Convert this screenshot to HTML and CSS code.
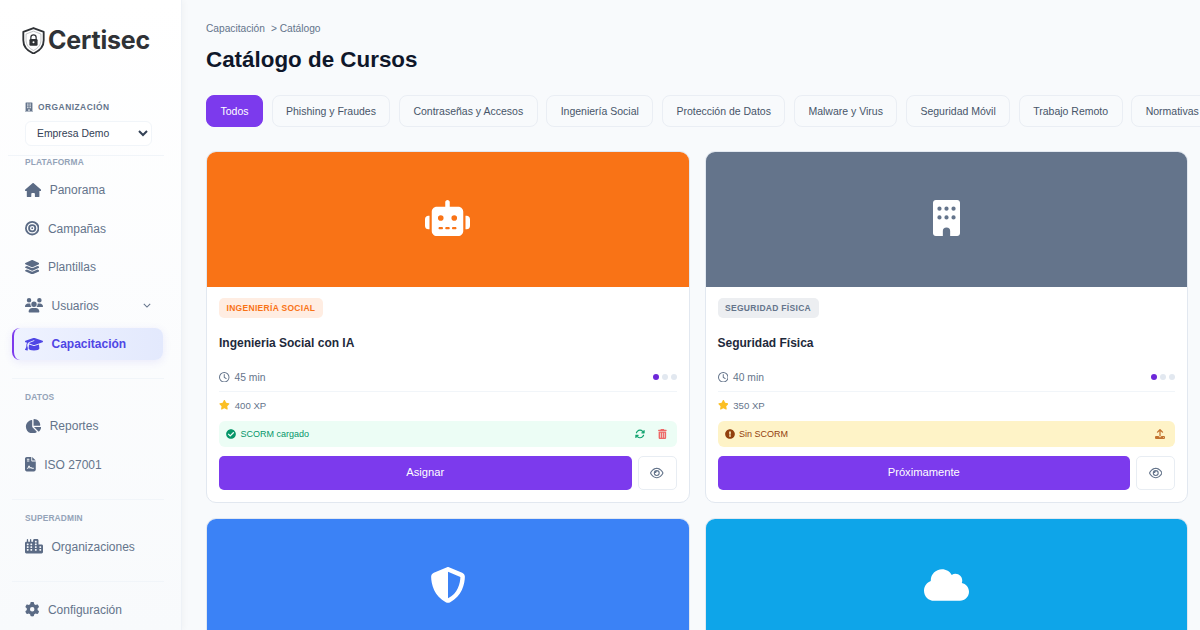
FILE: index.html
```html
<!DOCTYPE html>
<html lang="es">
<head>
    <meta charset="UTF-8">
    <title>Certisec - Catálogo de Cursos</title>
    <link rel="stylesheet" href="styles.css">
</head>
<body>

<svg class="icon-defs" aria-hidden="true">
    <defs>
        <path id="i-building" d="M436 480h-20V24c0-13.255-10.745-24-24-24H56C42.745 0 32 10.745 32 24v456H12c-6.627 0-12 5.373-12 12v20h448v-20c0-6.627-5.373-12-12-12zM128 76c0-6.627 5.373-12 12-12h40c6.627 0 12 5.373 12 12v40c0 6.627-5.373 12-12 12h-40c-6.627 0-12-5.373-12-12V76zm0 96c0-6.627 5.373-12 12-12h40c6.627 0 12 5.373 12 12v40c0 6.627-5.373 12-12 12h-40c-6.627 0-12-5.373-12-12v-40zm52 148h-40c-6.627 0-12-5.373-12-12v-40c0-6.627 5.373-12 12-12h40c6.627 0 12 5.373 12 12v40c0 6.627-5.373 12-12 12zm76 160h-64v-84c0-6.627 5.373-12 12-12h40c6.627 0 12 5.373 12 12v84zm64-172c0 6.627-5.373 12-12 12h-40c-6.627 0-12-5.373-12-12v-40c0-6.627 5.373-12 12-12h40c6.627 0 12 5.373 12 12v40zm0-96c0 6.627-5.373 12-12 12h-40c-6.627 0-12-5.373-12-12v-40c0-6.627 5.373-12 12-12h40c6.627 0 12 5.373 12 12v40zm0-96c0 6.627-5.373 12-12 12h-40c-6.627 0-12-5.373-12-12V76c0-6.627 5.373-12 12-12h40c6.627 0 12 5.373 12 12v40z"/>
        <path id="i-home" d="M575.8 255.500c0 18-15 32.100-32 32.100h-32l.7 160.200c0 2.700-.2 5.400-.5 8.100V472c0 22.100-17.900 40-40 40H456c-1.100 0-2.200 0-3.300-.1c-1.400 .1-2.800 .1-4.200 .1H416 392c-22.100 0-40-17.900-40-40V448 384c0-17.700-14.300-32-32-32H256c-17.700 0-32 14.300-32 32v64 24c0 22.100-17.900 40-40 40H160 128.100c-1.500 0-3-.1-4.500-.2c-1.200 .1-2.400 .2-3.600 .2H104c-22.100 0-40-17.900-40-40V360c0-.9 0-1.900 .1-2.800V287.600H32c-18 0-32-14-32-32.100c0-9 3-17 10-24L266.400 8c7-7 15-8 22-8s15 2 21 7L564.800 231.500c8 7 12 15 11 24z"/>
        <path id="i-bullseye" d="M448 256A192 192 0 1 0 64 256a192 192 0 1 0 384 0zM0 256a256 256 0 1 1 512 0A256 256 0 1 1 0 256zm256 80a80 80 0 1 0 0-160 80 80 0 1 0 0 160zm0-224a144 144 0 1 1 0 288 144 144 0 1 1 0-288zM224 256a32 32 0 1 1 64 0 32 32 0 1 1 -64 0z"/>
        <path id="i-layers" d="M12.410 148.020l232.940 105.670c6.800 3.090 14.490 3.090 21.290 0l232.940-105.670c16.550-7.510 16.550-32.520 0-40.030L266.650 2.310a25.607 25.607 0 0 0-21.290 0L12.410 107.980c-16.550 7.510-16.550 32.530 0 40.040zm487.180 88.280l-58.090-26.330-161.640 73.270c-7.560 3.430-15.590 5.170-23.860 5.170s-16.290-1.740-23.860-5.170L70.510 209.970l-58.100 26.330c-16.550 7.500-16.550 32.500 0 40l232.940 105.590c6.800 3.080 14.490 3.080 21.290 0L499.590 276.300c16.550-7.500 16.550-32.500 0-40zm0 127.800l-57.870-26.230-161.860 73.370c-7.560 3.430-15.590 5.170-23.860 5.170s-16.290-1.740-23.860-5.170L70.290 337.870 12.410 364.100c-16.550 7.500-16.550 32.500 0 40l232.940 105.590c6.800 3.080 14.490 3.080 21.290 0L499.590 404.100c16.550-7.500 16.550-32.500 0-40z"/>
        <path id="i-users" d="M144 0a80 80 0 1 1 0 160A80 80 0 1 1 144 0zM512 0a80 80 0 1 1 0 160A80 80 0 1 1 512 0zM0 298.700C0 239.800 47.800 192 106.700 192h42.700c15.900 0 31 3.500 44.600 9.700c-1.300 7.200-1.900 14.700-1.900 22.300c0 38.200 16.800 72.500 43.300 96c-.2 0-.4 0-.7 0H21.300C9.600 320 0 310.400 0 298.700zM405.300 320c-.2 0-.4 0-.7 0c26.600-23.500 43.300-57.800 43.300-96c0-7.600-.7-15-1.900-22.300c13.600-6.300 28.700-9.700 44.600-9.700h42.700C592.200 192 640 239.800 640 298.700c0 11.800-9.600 21.300-21.300 21.300H405.300zM224 224a96 96 0 1 1 192 0 96 96 0 1 1 -192 0zM128 485.300C128 411.700 187.700 352 261.300 352H378.700C452.300 352 512 411.700 512 485.300c0 14.700-11.900 26.700-26.700 26.700H154.700c-14.700 0-26.700-11.900-26.700-26.700z"/>
        <path id="i-cap" d="M320 32c-8.100 0-16.100 1.400-23.700 4.100L15.800 137.400C6.300 140.900 0 149.900 0 160s6.300 19.100 15.800 22.600l57.900 20.900C57.300 229.300 48 259.800 48 291.900v28.100c0 28.400-10.800 57.700-22.300 80.800c-6.500 13-13.900 25.800-22.500 37.600C0 442.700-.9 448.300 .9 453.400s6 8.900 11.200 10.200l64 16c4.200 1.100 8.700 .3 12.400-2s6.300-6.100 7.100-10.400c8.600-42.800 4.300-81.200-2.100-108.700C90.300 344.300 86 329.800 80 316.500V291.900c0-30.200 10.200-58.700 27.900-81.500c12.900-15.500 29.600-28 49.200-35.700l157-61.700c8.200-3.200 17.500 .8 20.700 9s-.8 17.500-9 20.700l-157 61.700c-12.400 4.900-23.300 12.400-32.200 21.600l159.600 57.600c7.600 2.700 15.600 4.100 23.700 4.100s16.100-1.400 23.700-4.100L624.200 182.600c9.500-3.400 15.800-12.500 15.800-22.600s-6.300-19.100-15.800-22.600L343.700 36.100C336.100 33.400 328.100 32 320 32zM128 408c0 35.300 86 72 192 72s192-36.700 192-72L496.700 262.600 354.500 314c-11.100 4-22.800 6-34.500 6s-23.500-2-34.500-6L143.300 262.600 128 408z"/>
        <path id="i-pie" d="M304 240V16.600c0-9 7-16.600 16-16.600C443.700 0 544 100.300 544 224c0 9-7.600 16-16.600 16H304zM32 272C32 150.700 122.100 50.300 239 34.300c9.200-1.300 17 6.100 17 15.400V288L412.500 444.500c6.700 6.700 6.200 17.700-1.500 23.100C371.800 495.600 323.800 512 272 512C139.500 512 32 404.600 32 272zm526.400 16c9.300 0 16.600 7.800 15.400 17c-7.700 55.900-34.600 105.600-73.900 142.300c-6 5.600-15.400 5.200-21.200-.7L320 288H558.400z"/>
        <path id="i-file" d="M64 0C28.700 0 0 28.700 0 64V448c0 35.300 28.700 64 64 64H320c35.300 0 64-28.700 64-64V160H256c-17.700 0-32-14.300-32-32V0H64zM256 0V128H384L256 0zM80 64h64c8.800 0 16 7.200 16 16s-7.200 16-16 16H80c-8.800 0-16-7.200-16-16s7.200-16 16-16zm0 64h64c8.800 0 16 7.200 16 16s-7.200 16-16 16H80c-8.800 0-16-7.200-16-16s7.200-16 16-16zm54.200 253.800c-6.100 20.300-24.800 34.200-46 34.200H80c-8.800 0-16-7.200-16-16s7.200-16 16-16h8.200c7.100 0 13.300-4.600 15.300-11.400l14.900-49.500c3.400-11.300 13.800-19.100 25.600-19.100s22.200 7.700 25.600 19.100l11.600 38.600c7.400-6.200 16.800-9.700 26.800-9.700c15.900 0 30.400 9 37.500 23.200l4.400 8.800H304c8.800 0 16 7.200 16 16s-7.200 16-16 16H240c-6.100 0-11.600-3.400-14.300-8.800l-8.800-17.700c-1.700-3.400-5.100-5.500-8.800-5.500s-7.200 2.100-8.800 5.500l-8.800 17.700c-2.900 5.900-9.200 9.400-15.700 8.800s-12.100-5.100-14-11.300L144 349l-9.800 32.800z"/>
        <path id="i-city" d="M480 48c0-26.500-21.500-48-48-48H336c-26.500 0-48 21.500-48 48V96H224V24c0-13.300-10.700-24-24-24s-24 10.700-24 24V96H112V24c0-13.300-10.700-24-24-24S64 10.700 64 24V96H48C21.500 96 0 117.500 0 144v96V464c0 26.500 21.500 48 48 48H304h32 96H592c26.500 0 48-21.500 48-48V240c0-26.500-21.500-48-48-48H480V48zm96 320v32c0 8.800-7.200 16-16 16H528c-8.800 0-16-7.200-16-16V368c0-8.800 7.200-16 16-16h32c8.800 0 16 7.200 16 16zM240 416H208c-8.800 0-16-7.200-16-16V368c0-8.800 7.200-16 16-16h32c8.800 0 16 7.200 16 16v32c0 8.800-7.200 16-16 16zM128 400c0 8.800-7.200 16-16 16H80c-8.800 0-16-7.200-16-16V368c0-8.800 7.200-16 16-16h32c8.800 0 16 7.200 16 16v32zM560 256c8.800 0 16 7.200 16 16v32c0 8.800-7.200 16-16 16H528c-8.800 0-16-7.200-16-16V272c0-8.800 7.200-16 16-16h32zM256 176v32c0 8.800-7.200 16-16 16H208c-8.800 0-16-7.200-16-16V176c0-8.800 7.200-16 16-16h32c8.800 0 16 7.200 16 16zM112 160c8.800 0 16 7.200 16 16v32c0 8.800-7.200 16-16 16H80c-8.800 0-16-7.200-16-16V176c0-8.800 7.200-16 16-16h32zM256 304c0 8.800-7.200 16-16 16H208c-8.800 0-16-7.200-16-16V272c0-8.800 7.200-16 16-16h32c8.800 0 16 7.200 16 16v32zM112 320H80c-8.800 0-16-7.200-16-16V272c0-8.800 7.200-16 16-16h32c8.800 0 16 7.200 16 16v32c0 8.800-7.200 16-16 16zm304-48v32c0 8.800-7.200 16-16 16H368c-8.800 0-16-7.200-16-16V272c0-8.800 7.200-16 16-16h32c8.800 0 16 7.200 16 16zM368 64h32c8.800 0 16 7.200 16 16v32c0 8.800-7.200 16-16 16H368c-8.800 0-16-7.200-16-16V80c0-8.800 7.200-16 16-16zm48 112v32c0 8.800-7.200 16-16 16H368c-8.800 0-16-7.200-16-16V176c0-8.800 7.200-16 16-16h32c8.800 0 16 7.200 16 16zM368 352h32c8.800 0 16 7.200 16 16v32c0 8.800-7.200 16-16 16H368c-8.800 0-16-7.200-16-16V368c0-8.800 7.200-16 16-16z"/>
        <path id="i-cog" d="M495.900 166.600c3.200 8.700 .5 18.400-6.400 24.600l-43.300 39.400c1.100 8.300 1.700 16.800 1.700 25.400s-.6 17.100-1.700 25.400l43.300 39.400c6.900 6.200 9.600 15.900 6.400 24.600c-4.400 11.900-9.700 23.300-15.800 34.300l-4.700 8.100c-6.600 11-14 21.400-22.100 31.200c-5.900 7.200-15.700 9.600-24.500 6.800l-55.700-17.700c-13.400 10.300-28.200 18.900-44 25.400l-12.500 57.100c-2 9.100-9 16.300-18.200 17.800c-13.800 2.300-28 3.500-42.500 3.500s-28.700-1.200-42.500-3.500c-9.200-1.500-16.200-8.700-18.200-17.800l-12.500-57.100c-15.800-6.500-30.600-15.100-44-25.400L83.100 425.900c-8.800 2.800-18.600 .3-24.500-6.800c-8.100-9.800-15.500-20.200-22.100-31.200l-4.700-8.100c-6.100-11-11.400-22.400-15.800-34.300c-3.200-8.700-.5-18.400 6.400-24.600l43.300-39.400C64.600 273.100 64 264.600 64 256s.6-17.100 1.700-25.400L22.400 191.200c-6.900-6.200-9.600-15.900-6.400-24.600c4.400-11.900 9.700-23.300 15.800-34.300l4.700-8.100c6.600-11 14-21.400 22.100-31.200c5.900-7.200 15.700-9.600 24.500-6.800l55.700 17.700c13.400-10.300 28.200-18.900 44-25.400l12.500-57.100c2-9.100 9-16.300 18.200-17.800C227.300 1.200 241.500 0 256 0s28.700 1.200 42.500 3.500c9.200 1.500 16.200 8.700 18.200 17.800l12.500 57.100c15.800 6.500 30.600 15.100 44 25.400l55.700-17.700c8.800-2.800 18.600-.3 24.500 6.800c8.100 9.800 15.500 20.200 22.100 31.200l4.700 8.100c6.100 11 11.400 22.400 15.800 34.300zM256 336a80 80 0 1 0 0-160 80 80 0 1 0 0 160z"/>
        <path id="i-robot" d="M320 0c17.700 0 32 14.300 32 32V96H472c39.800 0 72 32.200 72 72V440c0 39.800-32.200 72-72 72H168c-39.800 0-72-32.200-72-72V168c0-39.800 32.200-72 72-72H288V32c0-17.700 14.300-32 32-32zM208 384c-8.800 0-16 7.200-16 16s7.200 16 16 16h32c8.800 0 16-7.200 16-16s-7.200-16-16-16H208zm96 0c-8.800 0-16 7.200-16 16s7.200 16 16 16h32c8.800 0 16-7.200 16-16s-7.200-16-16-16H304zm96 0c-8.800 0-16 7.200-16 16s7.200 16 16 16h32c8.800 0 16-7.200 16-16s-7.200-16-16-16H400zM264 256a40 40 0 1 0 -80 0 40 40 0 1 0 80 0zm152 40a40 40 0 1 0 0-80 40 40 0 1 0 0 80zM48 224H64V416H48c-26.500 0-48-21.500-48-48V272c0-26.500 21.500-48 48-48zm544 0c26.500 0 48 21.500 48 48v96c0 26.500-21.500 48-48 48H576V224h16z"/>
        <path id="i-office" fill-rule="evenodd" d="M40 0H344c22 0 40 18 40 40V472c0 22-18 40-40 40H244V442a52 52 0 0 0-104 0v70H40c-22 0-40-18-40-40V40C0 18 18 0 40 0zM92 94a30 30 0 1 0 0 60 30 30 0 1 0 0-60zm100 0a30 30 0 1 0 0 60 30 30 0 1 0 0-60zm100 0a30 30 0 1 0 0 60 30 30 0 1 0 0-60zM92 218a30 30 0 1 0 0 60 30 30 0 1 0 0-60zm100 0a30 30 0 1 0 0 60 30 30 0 1 0 0-60zm100 0a30 30 0 1 0 0 60 30 30 0 1 0 0-60z"/>
        <path id="i-shield" d="M256 0c4.600 0 9.200 1 13.400 2.900L457.700 82.800c22 9.300 38.400 31 38.300 57.200c-.5 99.200-41.300 280.700-213.600 363.200c-16.700 8-36.100 8-52.800 0C57.300 420.700 16.500 239.200 16 140c-.1-26.200 16.300-47.900 38.300-57.200L242.700 2.900C246.800 1 251.400 0 256 0zm0 66.800V444.800C394 378 431.100 230.100 432 141.400L256 66.800l0 0z"/>
        <path id="i-cloud" d="M0 336c0 79.500 64.500 144 144 144H512c70.700 0 128-57.300 128-128c0-61.900-44-113.600-102.400-125.400c4.100-10.700 6.400-22.400 6.400-34.600c0-53-43-96-96-96c-19.700 0-38.100 6-53.300 16.200C367 64.200 315.300 32 256 32C167.600 32 96 103.600 96 192c0 2.700 .1 5.400 .2 8.100C40.200 219.800 0 273.200 0 336z"/>
        <path id="i-clock" d="M464 256A208 208 0 1 1 48 256a208 208 0 1 1 416 0zM0 256a256 256 0 1 0 512 0A256 256 0 1 0 0 256zM232 120V256c0 8 4 15.500 10.700 20l96 64c11 7.400 25.900 4.400 33.300-6.700s4.400-25.900-6.700-33.300L280 243.200V120c0-13.300-10.700-24-24-24s-24 10.700-24 24z"/>
        <path id="i-star" d="M259.300 17.800L194 150.200 47.900 171.500c-26.200 3.800-36.700 36.100-17.700 54.600l105.700 103-25 145.500c-4.500 26.300 23.200 46 46.400 33.700L288 439.600l130.700 68.700c23.200 12.200 50.900-7.400 46.400-33.700l-25-145.500 105.700-103c19-18.500 8.500-50.800-17.700-54.600L382 150.200 316.700 17.800c-11.700-23.600-45.600-23.900-57.400 0z"/>
        <path id="i-check" d="M504 256c0 136.967-111.033 248-248 248S8 392.967 8 256 119.033 8 256 8s248 111.033 248 248zM227.314 387.314l184-184c6.248-6.248 6.248-16.379 0-22.627l-22.627-22.627c-6.248-6.249-16.379-6.249-22.628 0L216 308.118l-70.059-70.059c-6.248-6.248-16.379-6.248-22.628 0l-22.627 22.627c-6.248 6.248-6.248 16.379 0 22.627l104 104c6.249 6.249 16.379 6.249 22.628.001z"/>
        <path id="i-sync" d="M105.100 202.600c7.700-21.800 20.200-42.300 37.800-59.800c62.500-62.500 163.800-62.500 226.300 0L386.300 160H352c-17.700 0-32 14.300-32 32s14.300 32 32 32H463.500c0 0 0 0 0 0h.4c17.700 0 32-14.300 32-32V80c0-17.700-14.300-32-32-32s-32 14.300-32 32v35.200L414.400 97.600c-87.500-87.500-229.300-87.500-316.800 0C73.200 122 55.600 150.700 44.800 181.400c-5.900 16.700 2.900 34.900 19.500 40.800s34.900-2.900 40.800-19.500zM39 289.300c-5 1.500-9.800 4.200-13.700 8.200c-4 4-6.700 8.800-8.100 14c-.3 1.200-.6 2.500-.8 3.800c-.3 1.700-.4 3.400-.4 5.100V432c0 17.700 14.300 32 32 32s32-14.300 32-32V396.900l17.600 17.500 0 0c87.500 87.400 229.300 87.400 316.700 0c24.400-24.400 42.100-53.100 52.900-83.700c5.900-16.700-2.900-34.900-19.500-40.800s-34.900 2.900-40.800 19.500c-7.700 21.800-20.200 42.300-37.800 59.800c-62.500 62.500-163.800 62.500-226.300 0l-.1-.1L125.600 352H160c17.700 0 32-14.300 32-32s-14.300-32-32-32H48.400c-1.600 0-3.200 .1-4.800 .3s-3.100 .5-4.600 1z"/>
        <path id="i-trash" d="M135.200 17.700C140.600 6.800 151.700 0 163.800 0H284.200c12.100 0 23.200 6.800 28.600 17.700L320 32h96c17.700 0 32 14.300 32 32s-14.300 32-32 32H32C14.300 96 0 81.700 0 64S14.300 32 32 32h96l7.200-14.300zM32 128H416V448c0 35.300-28.700 64-64 64H96c-35.300 0-64-28.700-64-64V128zm96 64c-8.800 0-16 7.200-16 16V432c0 8.800 7.200 16 16 16s16-7.200 16-16V208c0-8.800-7.200-16-16-16zm96 0c-8.800 0-16 7.200-16 16V432c0 8.800 7.200 16 16 16s16-7.200 16-16V208c0-8.800-7.200-16-16-16zm96 0c-8.800 0-16 7.200-16 16V432c0 8.800 7.200 16 16 16s16-7.200 16-16V208c0-8.800-7.200-16-16-16z"/>
        <path id="i-alert" d="M504 256c0 136.997-111.043 248-248 248S8 392.997 8 256C8 119.083 119.043 8 256 8s248 111.083 248 248zm-248 50c-25.405 0-46 20.595-46 46s20.595 46 46 46 46-20.595 46-46-20.595-46-46-46zm-43.673-165.346l7.418 136c.347 6.364 5.609 11.346 11.982 11.346h48.546c6.373 0 11.635-4.982 11.982-11.346l7.418-136c.375-6.874-5.098-12.654-11.982-12.654h-63.383c-6.884 0-12.356 5.780-11.981 12.654z"/>
        <path id="i-upload" d="M288 109.300V352c0 17.700-14.300 32-32 32s-32-14.300-32-32V109.300l-73.400 73.400c-12.500 12.500-32.800 12.500-45.300 0s-12.500-32.800 0-45.300l128-128c12.500-12.500 32.800-12.500 45.300 0l128 128c12.500 12.500 12.500 32.800 0 45.300s-32.800 12.500-45.300 0L288 109.300zM64 352H192c0 35.300 28.700 64 64 64s64-28.700 64-64H448c35.300 0 64 28.700 64 64v32c0 35.300-28.700 64-64 64H64c-35.300 0-64-28.700-64-64V416c0-35.300 28.700-64 64-64zM432 456a24 24 0 1 0 0-48 24 24 0 1 0 0 48z"/>
        <path id="i-eye" d="M288 80c-65.200 0-118.800 29.600-159.900 67.700C89.600 183.500 63 226 49.400 256c13.600 30 40.200 72.500 78.600 108.300C169.200 402.400 222.800 432 288 432s118.800-29.600 159.900-67.700C486.400 328.500 513 286 526.600 256c-13.600-30-40.200-72.500-78.600-108.300C406.800 109.600 353.200 80 288 80zM95.400 112.600C142.500 68.800 207.200 32 288 32s145.500 36.800 192.600 80.600c46.800 43.500 78.100 95.400 93 131.100c3.300 7.900 3.300 16.700 0 24.600c-14.900 35.700-46.200 87.700-93 131.100C433.500 443.200 368.800 480 288 480s-145.500-36.800-192.600-80.600C48.600 356 17.300 304 2.500 268.300c-3.300-7.900-3.300-16.700 0-24.600C17.300 208 48.600 156 95.400 112.600zM288 336c44.200 0 80-35.800 80-80s-35.800-80-80-80c-.7 0-1.300 0-2 0c1.300 5.100 2 10.500 2 16c0 35.300-28.700 64-64 64c-5.500 0-10.900-.7-16-2c0 .7 0 1.300 0 2c0 44.200 35.800 80 80 80zm0-208a128 128 0 1 1 0 256 128 128 0 1 1 0-256z"/>
    </defs>
</svg>

<div class="app">
    <aside class="sidebar">
        <div class="logo">
            <svg class="logo-mark" viewBox="1 0.500 22 26.500">
                <path class="logo-outer" d="M12 1.500l10 3.800v8.200c0 6-4 10.500-10 13-6-2.500-10-7-10-13V5.300z"/>
                <path class="logo-inner" d="M12 4.600l7.300 2.800v6.100c0 4.600-3 8-7.300 10-4.300-2-7.300-5.400-7.300-10V7.400z"/>
                <path class="logo-shackle" d="M9.400 12.800v-2a2.600 2.600 0 0 1 5.200 0v2"/>
                <rect class="logo-lock" x="8" y="12.400" width="8" height="6.400" rx="1.200"/>
                <circle class="logo-key" cx="12" cy="15.500" r="1"/>
            </svg>
            <span class="logo-text">Certisec</span>
        </div>

        <div class="org">
            <div class="org-label">
                <svg class="org-icon" viewBox="0 0 448 512"><use href="#i-building"/></svg>
                <span>ORGANIZACIÓN</span>
            </div>
            <select class="org-select">
                <option>Empresa Demo</option>
            </select>
        </div>

        <div class="section section-first">
            <div class="section-title">PLATAFORMA</div>
            <nav class="nav">
                <a class="nav-item"><svg class="nav-icon" viewBox="0 0 576 512"><use href="#i-home"/></svg>Panorama</a>
                <a class="nav-item"><svg class="nav-icon" viewBox="0 0 512 512"><use href="#i-bullseye"/></svg>Campañas</a>
                <a class="nav-item"><svg class="nav-icon" viewBox="0 0 512 512"><use href="#i-layers"/></svg>Plantillas</a>
                <a class="nav-item"><svg class="nav-icon" viewBox="0 0 640 512"><use href="#i-users"/></svg>Usuarios
                    <svg class="nav-chevron" viewBox="0 0 10 6"><path d="M1 1l4 4 4-4"/></svg>
                </a>
                <a class="nav-item active"><svg class="nav-icon" viewBox="0 0 640 512"><use href="#i-cap"/></svg>Capacitación</a>
            </nav>
        </div>

        <div class="section">
            <div class="section-title section-title-low">DATOS</div>
            <nav class="nav">
                <a class="nav-item"><svg class="nav-icon" viewBox="0 0 576 512"><use href="#i-pie"/></svg>Reportes</a>
                <a class="nav-item"><svg class="nav-icon" viewBox="0 0 384 512"><use href="#i-file"/></svg>ISO 27001</a>
            </nav>
        </div>

        <div class="section">
            <div class="section-title section-title-low">SUPERADMIN</div>
            <nav class="nav">
                <a class="nav-item"><svg class="nav-icon" viewBox="0 0 640 512"><use href="#i-city"/></svg>Organizaciones</a>
            </nav>
        </div>

        <nav class="nav nav-bottom">
            <a class="nav-item"><svg class="nav-icon" viewBox="0 0 512 512"><use href="#i-cog"/></svg>Configuración</a>
        </nav>
    </aside>

    <main class="main">
        <div class="breadcrumb"><span>Capacitación</span><span>&gt; Catálogo</span></div>
        <h1 class="page-title">Catálogo de Cursos</h1>

        <div class="filters">
            <button class="filter active">Todos</button>
            <button class="filter">Phishing y Fraudes</button>
            <button class="filter">Contraseñas y Accesos</button>
            <button class="filter">Ingeniería Social</button>
            <button class="filter">Protección de Datos</button>
            <button class="filter">Malware y Virus</button>
            <button class="filter">Seguridad Móvil</button>
            <button class="filter">Trabajo Remoto</button>
            <button class="filter">Normativas</button>
        </div>

        <div class="grid">
            <article class="card">
                <div class="card-media media-orange">
                    <svg class="media-icon" viewBox="0 0 640 512"><use href="#i-robot"/></svg>
                </div>
                <div class="card-body">
                    <span class="tag tag-orange">INGENIERÍA SOCIAL</span>
                    <h2 class="card-title">Ingenieria Social con IA</h2>
                    <div class="meta meta-line">
                        <span class="meta-item"><svg class="meta-icon" viewBox="0 0 512 512"><use href="#i-clock"/></svg>45 min</span>
                        <span class="dots"><i class="dot on"></i><i class="dot"></i><i class="dot"></i></span>
                    </div>
                    <div class="meta">
                        <span class="meta-item meta-xp"><svg class="meta-icon star" viewBox="0 0 576 512"><use href="#i-star"/></svg>400 XP</span>
                    </div>
                    <div class="scorm scorm-ok">
                        <svg class="scorm-icon" viewBox="0 0 512 512"><use href="#i-check"/></svg>
                        <span>SCORM cargado</span>
                        <span class="scorm-actions">
                            <svg class="scorm-icon icon-sync" viewBox="0 0 512 512"><use href="#i-sync"/></svg>
                            <svg class="scorm-icon icon-trash" viewBox="0 0 448 512"><use href="#i-trash"/></svg>
                        </span>
                    </div>
                    <div class="actions">
                        <button class="btn-primary">Asignar</button>
                        <button class="btn-eye"><svg class="eye-icon" viewBox="0 0 576 512"><use href="#i-eye"/></svg></button>
                    </div>
                </div>
            </article>

            <article class="card">
                <div class="card-media media-slate">
                    <svg class="media-icon" viewBox="0 0 384 512"><use href="#i-office"/></svg>
                </div>
                <div class="card-body">
                    <span class="tag tag-slate">SEGURIDAD FÍSICA</span>
                    <h2 class="card-title">Seguridad Física</h2>
                    <div class="meta meta-line">
                        <span class="meta-item"><svg class="meta-icon" viewBox="0 0 512 512"><use href="#i-clock"/></svg>40 min</span>
                        <span class="dots"><i class="dot on"></i><i class="dot"></i><i class="dot"></i></span>
                    </div>
                    <div class="meta">
                        <span class="meta-item meta-xp"><svg class="meta-icon star" viewBox="0 0 576 512"><use href="#i-star"/></svg>350 XP</span>
                    </div>
                    <div class="scorm scorm-none">
                        <svg class="scorm-icon" viewBox="0 0 512 512"><use href="#i-alert"/></svg>
                        <span>Sin SCORM</span>
                        <span class="scorm-actions">
                            <svg class="scorm-icon icon-upload" viewBox="0 0 512 512"><use href="#i-upload"/></svg>
                        </span>
                    </div>
                    <div class="actions">
                        <button class="btn-primary">Próximamente</button>
                        <button class="btn-eye"><svg class="eye-icon" viewBox="0 0 576 512"><use href="#i-eye"/></svg></button>
                    </div>
                </div>
            </article>

            <article class="card">
                <div class="card-media media-blue">
                    <svg class="media-icon" viewBox="0 0 512 512"><use href="#i-shield"/></svg>
                </div>
            </article>

            <article class="card">
                <div class="card-media media-sky">
                    <svg class="media-icon" viewBox="0 0 640 512"><use href="#i-cloud"/></svg>
                </div>
            </article>
        </div>
    </main>
</div>

</body>
</html>
```

FILE: styles.css
```css
* {
    box-sizing: border-box;
}

html, body {
    margin: 0;
    height: 100%;
    overflow: hidden;
}

body {
    background-color: #f8fafc;
    font-family: "Liberation Sans", Arial, sans-serif;
    color: #1e293b;
}

.icon-defs {
    position: absolute;
    width: 0;
    height: 0;
}

.app {
    display: flex;
    height: 630px;
}

/* sidebar */
.sidebar {
    width: 182px;
    flex-shrink: 0;
    padding: 27px 17px 0 12px;
    background: linear-gradient(180deg, #ffffff 0%, #f8fafc 100%);
    border-right: 1px solid #eef2f7;
    box-shadow: 2px 0 6px rgba(15, 23, 42, 0.03);
}

.logo {
    display: flex;
    align-items: center;
    gap: 3px;
    height: 26px;
    padding-left: 10px;
}

.logo-mark {
    width: 23px;
    height: 27px;
    flex-shrink: 0;
}

.logo-outer {
    fill: none;
    stroke: #2f3236;
    stroke-width: 1.8;
    stroke-linejoin: round;
}

.logo-inner {
    fill: none;
    stroke: #8b8e92;
    stroke-width: 0.5;
    stroke-linejoin: round;
}

.logo-shackle {
    fill: none;
    stroke: #2f3236;
    stroke-width: 1.2;
}

.logo-lock {
    fill: #2f3236;
}

.logo-key {
    fill: #ffffff;
}

.logo-text {
    font-family: Inter, "Liberation Sans", sans-serif;
    font-size: 25px;
    font-weight: 700;
    color: #2f3236;
    letter-spacing: -0.2px;
}

.org {
    margin-top: 49px;
    margin-left: -4px;
    padding: 0 0 9px 17px;
    border-bottom: 1px solid #f1f5f9;
}

.org-label {
    display: flex;
    align-items: center;
    gap: 5px;
    height: 10px;
    font-size: 8.4px;
    font-weight: 700;
    letter-spacing: 0.5px;
    color: #64748b;
}

.org-icon {
    width: 8px;
    height: 10px;
    fill: #64748b;
}

.org-select {
    display: block;
    width: 127px;
    height: 25px;
    margin-top: 9px;
    padding: 0 0 0 7px;
    font-family: "Liberation Sans", Arial, sans-serif;
    font-size: 10.4px;
    color: #334155;
    background-color: #ffffff;
    border: 1px solid #f1f5f9;
    border-radius: 6px;
}

.section {
    padding-bottom: 18px;
    padding-top: 13px;
    border-bottom: 1px solid #f1f5f9;
}

.section-first {
    padding-top: 1px;
}

.section-title {
    height: 10px;
    margin: 0 0 7px 13px;
    font-size: 8.4px;
    line-height: 10px;
    font-weight: 700;
    letter-spacing: 0.15px;
    color: #94a3b8;
}

.section-title-low {
    margin-bottom: 8px;
}

.nav {
    display: flex;
    flex-direction: column;
    gap: 6.5px;
}

.nav-bottom {
    margin-top: 12px;
}

.nav-item {
    display: flex;
    align-items: center;
    gap: 8.5px;
    height: 32px;
    padding: 0 13px;
    font-size: 12px;
    color: #64748b;
    border-radius: 8px;
}

.nav-icon {
    height: 14.4px;
    flex-shrink: 0;
    fill: #5b6b85;
}

.nav-chevron {
    width: 8px;
    height: 5px;
    margin-left: auto;
    fill: none;
    stroke: #64748b;
    stroke-width: 1.3;
}

.nav-item.active {
    width: 151px;
    font-weight: 700;
    color: #4f46e5;
    background: linear-gradient(90deg, #eef2ff 0%, #e3e9fd 100%);
    border-left: 2px solid #7c3aed;
    padding-left: 11px;
    box-shadow: 0 2px 8px rgba(79, 70, 229, 0.1);
}

.nav-item.active .nav-icon {
    fill: #4f46e5;
}

/* main */
.main {
    flex: 1;
    min-width: 0;
    padding: 22px 12px 0 24px;
    overflow: hidden;
}

.breadcrumb {
    display: flex;
    gap: 6px;
    height: 14px;
    font-size: 10.2px;
    line-height: 14px;
    color: #64748b;
}

.page-title {
    margin: 10px 0 0;
    font-size: 22.4px;
    line-height: 28px;
    font-weight: 700;
    color: #0f172a;
}

.filters {
    display: flex;
    gap: 8.5px;
    margin-top: 21px;
    margin-right: -12px;
    overflow: hidden;
}

.filter {
    flex-shrink: 0;
    height: 32px;
    padding: 0 13.5px 1px;
    font-family: "Liberation Sans", Arial, sans-serif;
    font-size: 10.5px;
    color: #475569;
    background-color: #f8fafc;
    border: 1px solid #eaeef4;
    border-radius: 8px;
}

.filter.active {
    color: #ffffff;
    background-color: #7c3aed;
    border-color: #7c3aed;
}

.grid {
    display: grid;
    grid-template-columns: 1fr 1fr;
    gap: 15px;
    margin-top: 24px;
}

.card {
    background-color: #ffffff;
    border: 1px solid #e2e8f0;
    border-radius: 10px;
    overflow: hidden;
}

.card-media {
    display: flex;
    align-items: center;
    justify-content: center;
    height: 135px;
    padding-bottom: 3px;
}

.media-orange {
    background-color: #f97316;
}

.media-slate {
    background-color: #64748b;
}

.media-blue {
    background-color: #3b82f6;
}

.media-sky {
    background-color: #0ea5e9;
}

.media-icon {
    height: 36px;
    fill: #ffffff;
}

.card-body {
    padding: 11px 12px 12px;
}

.tag {
    display: block;
    width: fit-content;
    height: 20px;
    padding: 0 7.5px;
    font-size: 8.5px;
    line-height: 20px;
    font-weight: 700;
    letter-spacing: 0.3px;
    border-radius: 5px;
}

.tag-orange {
    color: #f97316;
    background-color: #ffede2;
}

.tag-slate {
    color: #64748b;
    background-color: #eceef1;
}

.card-title {
    margin: 15px 0 0;
    font-size: 12px;
    line-height: 20px;
    font-weight: 700;
    color: #1e293b;
}

.meta {
    display: flex;
    align-items: center;
    justify-content: space-between;
    height: 14px;
    font-size: 10.3px;
    color: #64748b;
}

.meta-line {
    height: 22px;
    margin-top: 17px;
    padding-bottom: 7px;
    border-bottom: 1px solid #f1f5f9;
}

.meta-line + .meta {
    margin-top: 6px;
}

.meta-item {
    display: flex;
    align-items: center;
    gap: 5px;
}

.meta-xp {
    font-size: 9.6px;
}

.meta-icon {
    height: 10.5px;
    fill: #64748b;
}

.star {
    height: 9.6px;
    fill: #fbbf24;
}

.dots {
    display: flex;
    gap: 3px;
}

.dot {
    width: 6px;
    height: 6px;
    border-radius: 50%;
    background-color: #e2e8f0;
}

.dot.on {
    background-color: #6d28d9;
}

.scorm {
    display: flex;
    align-items: center;
    gap: 4.5px;
    height: 26px;
    margin-top: 9px;
    padding: 0 10px 0 7px;
    font-size: 9px;
    border-radius: 6px;
}

.scorm-ok {
    color: #059669;
    background-color: #ecfdf5;
}

.scorm-none {
    color: #92400e;
    background-color: #fef3c7;
}

.scorm-icon {
    height: 10px;
    fill: currentColor;
}

.scorm-actions {
    display: flex;
    gap: 13px;
    margin-left: auto;
}

.icon-sync {
    fill: #10a36f;
}

.icon-trash {
    fill: #ef4444;
    opacity: 0.8;
}

.icon-upload {
    fill: #b45309;
    opacity: 0.8;
}

.actions {
    display: flex;
    gap: 6px;
    margin-top: 9px;
}

.btn-primary {
    flex: 1;
    height: 34px;
    padding: 0 0 2px;
    font-family: "Liberation Sans", Arial, sans-serif;
    font-size: 11.2px;
    color: #ffffff;
    background-color: #7c3aed;
    border: none;
    border-radius: 5px;
}

.btn-eye {
    display: flex;
    align-items: center;
    justify-content: center;
    width: 39px;
    height: 34px;
    padding: 0;
    background-color: #ffffff;
    border: 1px solid #e8edf3;
    border-radius: 5px;
}

.eye-icon {
    height: 12px;
    fill: #64748b;
}
```
